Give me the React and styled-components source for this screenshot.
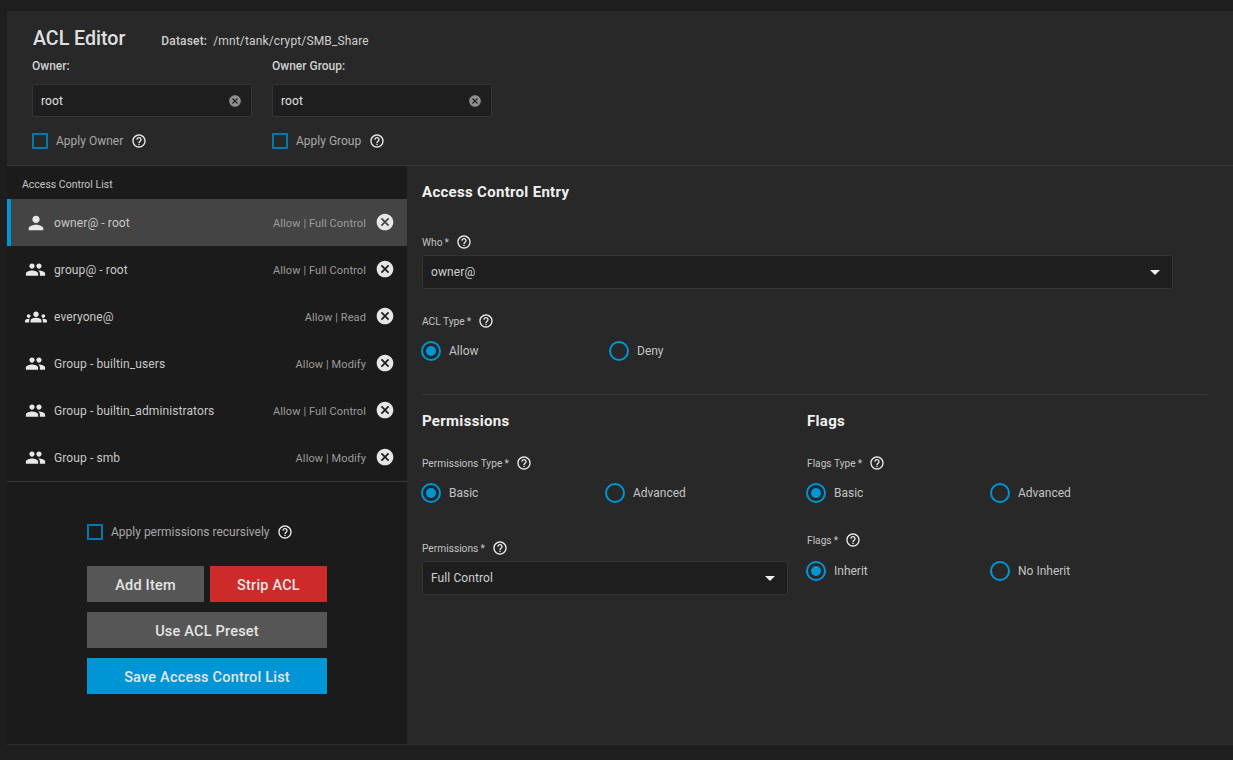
import React from "react";
import styled, { createGlobalStyle } from "styled-components";
import {
  MdPerson,
  MdPeople,
  MdGroups,
  MdCancel,
  MdHelpOutline,
  MdArrowDropDown,
} from "react-icons/md";

const GlobalStyle = createGlobalStyle`
  html, body {
    margin: 0;
    padding: 0;
    height: 100%;
    background: #1e1e1e;
    font-family: Roboto, "Liberation Sans", sans-serif;
  }
  * { box-sizing: border-box; }
`;

const Page = styled.div`
  width: 1233px;
  height: 760px;
  padding: 11px 0 16px 7px;
  overflow: hidden;
`;

const Card = styled.div`
  height: 733px;
  display: flex;
  flex-direction: column;
  background: #282828;
  box-shadow: 0 1px 0 #2e2e2e;
`;

const Header = styled.div`
  height: 155px;
  flex: none;
  padding: 16px 0 0 25px;
  border-bottom: 1px solid #383838;
`;

const TitleRow = styled.div`
  display: flex;
  align-items: center;
  height: 24px;
  padding-left: 1px;
  margin-bottom: 8px;
`;

const Title = styled.h1`
  margin: 0 36px 0 0;
  font-size: 19.6px;
  line-height: 24px;
  font-weight: 500;
  color: #e0e0e0;
`;

const Dataset = styled.div`
  font-size: 12px;
  letter-spacing: 0.15px;
  color: #cfcfcf;
  padding-top: 3px;
  b {
    font-weight: 500;
    margin-right: 3px;
  }
`;

const OwnerRow = styled.div`
  display: flex;
  gap: 20px;
`;

const OwnerField = styled.div`
  width: 220px;
`;

const OwnerLabel = styled.div`
  font-size: 12px;
  line-height: 14px;
  font-weight: 500;
  color: #d0d0d0;
  margin-bottom: 11px;
`;

const TextInput = styled.div`
  height: 33px;
  display: flex;
  align-items: center;
  justify-content: space-between;
  padding: 0 9px 0 8px;
  background: #1e1e1e;
  border: 1px solid #333;
  border-radius: 2px;
  font-size: 12px;
  letter-spacing: 0.1px;
  color: #e0e0e0;
  svg {
    color: #8f8f8f;
  }
`;

const CheckRow = styled.div`
  display: flex;
  align-items: center;
  margin-top: ${(p) => p.$top ?? 16}px;
  font-size: 12px;
  color: #a8a8a8;
`;

const Check = styled.span`
  width: 16px;
  height: 16px;
  flex: none;
  border: 2px solid #0278ae;
  margin-right: 8px;
`;

const Help = styled(MdHelpOutline)`
  flex: none;
  color: #ececec;
  margin-left: ${(p) => p.$gap || 6}px;
`;

const Body = styled.div`
  flex: 1;
  display: flex;
  min-height: 0;
`;

const ListPane = styled.div`
  width: 400px;
  flex: none;
  background: #1b1b1b;
  display: flex;
  flex-direction: column;
`;

const ListTitle = styled.div`
  height: 33px;
  padding: 13px 0 0 15px;
  font-size: 10.5px;
  line-height: 12px;
  color: #c4c4c4;
`;

const EntryList = styled.div`
  border-bottom: 1px solid #3a3a3a;
  height: 283px;
`;

const Entry = styled.div`
  height: 47px;
  display: flex;
  align-items: center;
  padding: 0 12px 0 ${(p) => (p.$active ? 14 : 18)}px;
  border-left: ${(p) => (p.$active ? "4px solid #0095d5" : "none")};
  background: ${(p) => (p.$active ? "#444" : "transparent")};
`;

const EntryIcon = styled.span`
  width: 29px;
  flex: none;
  display: flex;
  align-items: center;
  justify-content: flex-start;
  color: #e8e8e8;
  svg {
    display: block;
  }
`;

const EntryName = styled.span`
  flex: 1;
  font-size: 12px;
  letter-spacing: 0.1px;
  color: #c8c8c8;
`;

const EntryAccess = styled.span`
  font-size: 11px;
  letter-spacing: 0.1px;
  color: #9c9c9c;
  margin-right: 9px;
  padding-top: 1px;
`;

const Remove = styled(MdCancel)`
  flex: none;
  color: #e6e6e6;
  margin-top: -2px;
`;

const Actions = styled.div`
  padding: 42px 0 0 80px;
  width: 320px;
`;

const Buttons = styled.div`
  display: grid;
  grid-template-columns: 117px 117px;
  column-gap: 6px;
  row-gap: 10px;
  margin-top: 26px;
`;

const Button = styled.button`
  grid-column: ${(p) => (p.$wide ? "1 / span 2" : "auto")};
  height: 36px;
  border: none;
  padding: 2px 0 0;
  font-family: inherit;
  font-size: 14.5px;
  letter-spacing: 0.2px;
  font-weight: 500;
  color: #e4e4e4;
  background: ${(p) => p.$bg || "#565656"};
`;

const EditPane = styled.div`
  flex: 1;
  padding: 0 26px 0 15px;
`;

const SectionTitle = styled.h2`
  margin: 0;
  font-size: 15px;
  line-height: 18px;
  letter-spacing: 0.3px;
  font-weight: 700;
  color: #f0f0f0;
`;

const EntrySection = styled.div`
  height: 229px;
  padding-top: 17px;
  border-bottom: 1px solid #383838;
`;

const FieldLabel = styled.div`
  display: flex;
  align-items: center;
  height: 16px;
  margin-top: ${(p) => p.$top}px;
  font-size: 10.2px;
  color: #c4c4c4;
`;

const Select = styled.div`
  width: ${(p) => p.$width}px;
  height: 34px;
  margin-top: 5px;
  display: flex;
  align-items: center;
  justify-content: space-between;
  padding: 0 5px 0 8px;
  background: #1e1e1e;
  border: 1px solid #333;
  border-radius: 2px;
  font-size: 12px;
  letter-spacing: 0.1px;
  color: #cfcfcf;
  svg {
    color: #f0f0f0;
  }
`;

const RadioRow = styled.div`
  display: flex;
  margin-top: ${(p) => p.$top || 12}px;
  margin-left: -1px;
`;

const RadioOption = styled.div`
  width: ${(p) => p.$width}px;
  display: flex;
  align-items: center;
  gap: 8px;
  font-size: 12px;
  color: #c4c4c4;
`;

const RadioDot = styled.span`
  width: 20px;
  height: 20px;
  flex: none;
  border-radius: 50%;
  border: 2px solid #0095d5;
  display: flex;
  align-items: center;
  justify-content: center;
  &::after {
    content: "";
    width: 10px;
    height: 10px;
    border-radius: 50%;
    background: ${(p) => (p.$on ? "#0095d5" : "transparent")};
  }
`;

const Columns = styled.div`
  display: flex;
  padding-top: 17px;
`;

const Column = styled.div`
  width: ${(p) => p.$width}px;
  flex: none;
`;

const Radio = ({ label, on, width }) => (
  <RadioOption $width={width}>
    <RadioDot $on={on} />
    {label}
  </RadioOption>
);

const Label = ({ top, children }) => (
  <FieldLabel $top={top}>
    {children}&thinsp;*
    <Help size={16} $gap={7} />
  </FieldLabel>
);

const entries = [
  { icon: MdPerson, size: 22, name: "owner@ - root", access: "Allow | Full Control", active: true },
  { icon: MdPeople, size: 21, name: "group@ - root", access: "Allow | Full Control" },
  { icon: MdGroups, size: 22, name: "everyone@", access: "Allow | Read" },
  { icon: MdPeople, size: 21, name: "Group - builtin_users", access: "Allow | Modify" },
  { icon: MdPeople, size: 21, name: "Group - builtin_administrators", access: "Allow | Full Control" },
  { icon: MdPeople, size: 21, name: "Group - smb", access: "Allow | Modify" },
];

export default function App() {
  return (
    <>
      <GlobalStyle />
      <Page>
        <Card>
          <Header>
            <TitleRow>
              <Title>ACL Editor</Title>
              <Dataset>
                <b>Dataset:</b> /mnt/tank/crypt/SMB_Share
              </Dataset>
            </TitleRow>
            <OwnerRow>
              <OwnerField>
                <OwnerLabel>Owner:</OwnerLabel>
                <TextInput>
                  root
                  <MdCancel size={14} />
                </TextInput>
                <CheckRow>
                  <Check />
                  Apply Owner
                  <Help size={16} $gap={8} />
                </CheckRow>
              </OwnerField>
              <OwnerField>
                <OwnerLabel>Owner Group:</OwnerLabel>
                <TextInput>
                  root
                  <MdCancel size={14} />
                </TextInput>
                <CheckRow>
                  <Check />
                  Apply Group
                  <Help size={16} $gap={8} />
                </CheckRow>
              </OwnerField>
            </OwnerRow>
          </Header>
          <Body>
            <ListPane>
              <ListTitle>Access Control List</ListTitle>
              <EntryList>
                {entries.map((entry) => {
                  const Icon = entry.icon;
                  return (
                    <Entry key={entry.name} $active={entry.active}>
                      <EntryIcon>
                        <Icon size={entry.size} />
                      </EntryIcon>
                      <EntryName>{entry.name}</EntryName>
                      <EntryAccess>{entry.access}</EntryAccess>
                      <Remove size={20} />
                    </Entry>
                  );
                })}
              </EntryList>
              <Actions>
                <CheckRow $top={0}>
                  <Check />
                  Apply permissions recursively
                  <Help size={16} $gap={7} />
                </CheckRow>
                <Buttons>
                  <Button>Add Item</Button>
                  <Button $bg="#cd2a2a">Strip ACL</Button>
                  <Button $wide>Use ACL Preset</Button>
                  <Button $wide $bg="#0095d5">
                    Save Access Control List
                  </Button>
                </Buttons>
              </Actions>
            </ListPane>
            <EditPane>
              <EntrySection>
                <SectionTitle>Access Control Entry</SectionTitle>
                <Label top={33}>Who</Label>
                <Select $width={751}>
                  owner@
                  <MdArrowDropDown size={24} />
                </Select>
                <Label top={24}>ACL Type</Label>
                <RadioRow>
                  <Radio label="Allow" on width={188} />
                  <Radio label="Deny" width={188} />
                </RadioRow>
              </EntrySection>
              <Columns>
                <Column $width={385}>
                  <SectionTitle>Permissions</SectionTitle>
                  <Label top={25}>Permissions Type</Label>
                  <RadioRow>
                    <Radio label="Basic" on width={184} />
                    <Radio label="Advanced" width={184} />
                  </RadioRow>
                  <Label top={37}>Permissions</Label>
                  <Select $width={366}>
                    Full Control
                    <MdArrowDropDown size={24} />
                  </Select>
                </Column>
                <Column $width={385}>
                  <SectionTitle>Flags</SectionTitle>
                  <Label top={25}>Flags Type</Label>
                  <RadioRow>
                    <Radio label="Basic" on width={184} />
                    <Radio label="Advanced" width={184} />
                  </RadioRow>
                  <Label top={29}>Flags</Label>
                  <RadioRow $top={13}>
                    <Radio label="Inherit" on width={184} />
                    <Radio label="No Inherit" width={184} />
                  </RadioRow>
                </Column>
              </Columns>
            </EditPane>
          </Body>
        </Card>
      </Page>
    </>
  );
}
